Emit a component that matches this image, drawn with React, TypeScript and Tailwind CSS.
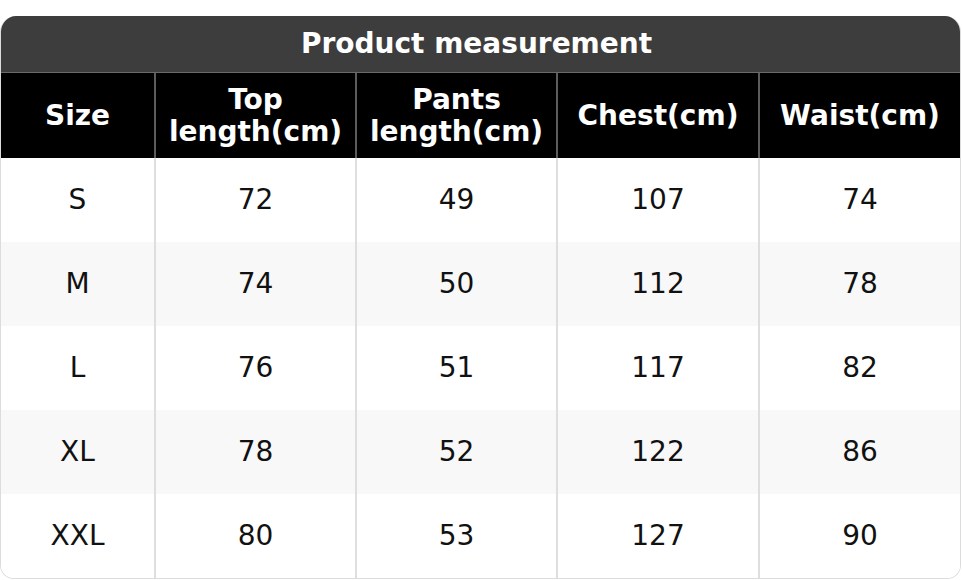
const headers: string[][] = [
  ['Size'],
  ['Top', 'length(cm)'],
  ['Pants', 'length(cm)'],
  ['Chest(cm)'],
  ['Waist(cm)'],
];

const rows = [
  ['S', '72', '49', '107', '74'],
  ['M', '74', '50', '112', '78'],
  ['L', '76', '51', '117', '82'],
  ['XL', '78', '52', '122', '86'],
  ['XXL', '80', '53', '127', '90'],
];

export default function App() {
  return (
    <div className="min-h-screen bg-white pt-4 font-['DejaVu_Sans',sans-serif]">
      <div className="w-[961px] overflow-hidden rounded-t-[16px] rounded-b-[14px] border-x border-b border-[#dcdcdc]">
        {/* title */}
        <div className="flex h-[56px] items-center justify-center bg-[#3d3d3d] pr-2 text-[28px] font-bold text-white">
          Product measurement
        </div>

        {/* header */}
        <div className="grid h-[86px] grid-cols-[153px_201px_201px_202px_1fr] border-t border-[#6a6a6a] bg-black text-white">
          {headers.map((h, i) => (
            <div
              key={i}
              className={`flex flex-col items-center justify-center text-[28px] font-bold leading-[32px] ${
                i > 0 ? 'border-l-2 border-[#5c5c5c]' : ''
              }`}
            >
              {h.map((line) => (
                <span key={line}>{line}</span>
              ))}
            </div>
          ))}
        </div>

        {/* body */}
        {rows.map((r, ri) => (
          <div
            key={r[0]}
            className={`grid h-[84px] grid-cols-[153px_201px_201px_202px_1fr] ${
              ri % 2 === 1 ? 'bg-[#f8f8f8]' : 'bg-white'
            }`}
          >
            {r.map((v, ci) => (
              <div
                key={ci}
                className={`flex items-center justify-center text-[28px] text-[#111] ${
                  ci > 0 ? 'border-l-2 border-[#dedede]' : ''
                }`}
              >
                {v}
              </div>
            ))}
          </div>
        ))}
      </div>
    </div>
  );
}
